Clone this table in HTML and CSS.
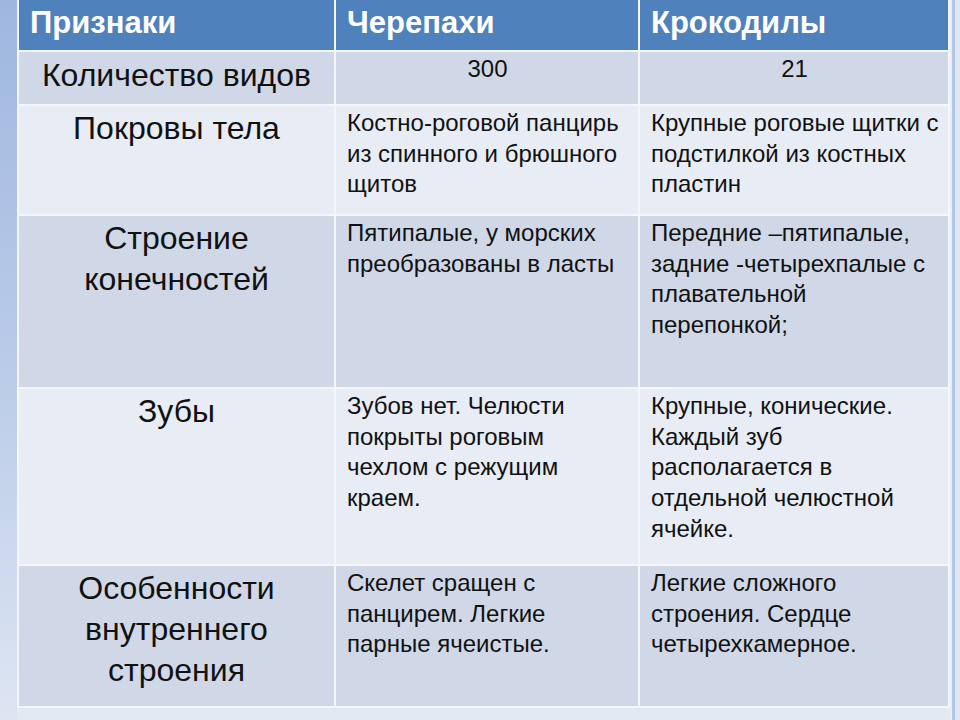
FILE: index.html
```html
<!DOCTYPE html>
<html lang="ru">
<head>
<meta charset="utf-8">
<title>Черепахи и крокодилы</title>
<link rel="stylesheet" href="styles.css">
</head>
<body>
<div class="page">
  <div class="table">
    <div class="cell head">Признаки</div>
    <div class="cell head">Черепахи</div>
    <div class="cell head">Крокодилы</div>

    <div class="cell dark label first">Количество видов</div>
    <div class="cell dark num">300</div>
    <div class="cell dark num">21</div>

    <div class="cell light label">Покровы тела</div>
    <div class="cell light text">Костно-роговой панцирь<br>из спинного и брюшного<br>щитов</div>
    <div class="cell light text">Крупные роговые щитки с<br>подстилкой из костных<br>пластин</div>

    <div class="cell dark label">Строение<br>конечностей</div>
    <div class="cell dark text">Пятипалые, у морских<br>преобразованы в ласты</div>
    <div class="cell dark text">Передние –пятипалые,<br>задние -четырехпалые с<br>плавательной<br>перепонкой;</div>

    <div class="cell light label">Зубы</div>
    <div class="cell light text">Зубов нет. Челюсти<br>покрыты роговым<br>чехлом с режущим<br>краем.</div>
    <div class="cell light text">Крупные, конические.<br>Каждый зуб<br>располагается в<br>отдельной челюстной<br>ячейке.</div>

    <div class="cell dark label">Особенности<br>внутреннего<br>строения</div>
    <div class="cell dark text">Скелет сращен с<br>панцирем. Легкие<br>парные ячеистые.</div>
    <div class="cell dark text">Легкие сложного<br>строения. Сердце<br>четырехкамерное.</div>
  </div>
</div>
</body>
</html>
```

FILE: styles.css
```css
html, body {
  margin: 0;
  padding: 0;
}
body {
  width: 960px;
  height: 720px;
  overflow: hidden;
  font-family: "Liberation Sans", Arial, sans-serif;
  color: #111;
  background:
    linear-gradient(180deg, #9fb7df 0%, #b9cbe8 50%, #dde5f2 100%) left top / 17px 100% no-repeat,
    linear-gradient(90deg, #e9eef6 0, #e9eef6 2px, #b3c6e6 2px, #b3c6e6 5px, #dfe7f3 5px) 950px 0 / 10px 100% no-repeat,
    #e3e9f2;
}
.page {
  padding-left: 17px;
}
.table {
  width: 929px;
  display: grid;
  grid-template-columns: 315px 302px 308px;
  grid-template-rows: 50px 52px 108px 171px 175px 140px;
  gap: 2px;
  padding: 0 2px 2px 2px;
  background: #f3f6fb;
}
.cell {
  padding: 2px 10px 0 11px;
  white-space: nowrap;
  overflow: visible;
}
.head {
  background: #4f81bd;
  color: #fff;
  font-weight: bold;
  font-size: 31px;
  line-height: 36px;
  padding-top: 5px;
}
.dark {
  background: #d0d8e7;
}
.light {
  background: #e8edf5;
}
.label {
  text-align: center;
  font-size: 32px;
  line-height: 40.8px;
  padding-left: 0;
  padding-right: 0;
}
.first {
  padding-top: 3px;
}
.text {
  font-size: 24px;
  line-height: 30.7px;
}
.num {
  text-align: center;
  font-size: 24px;
  line-height: 30.7px;
}
```
